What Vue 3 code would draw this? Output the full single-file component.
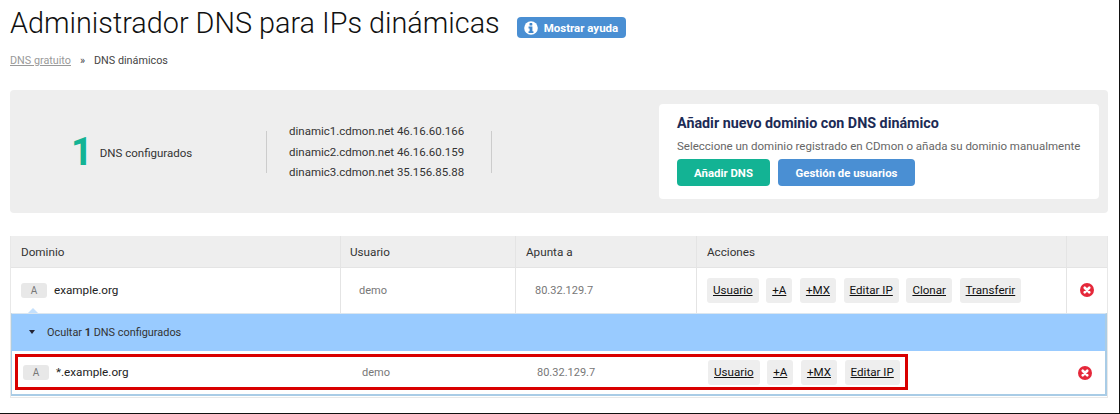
<template>
  <div class="page">
    <div class="title-row">
      <h1 class="title">Administrador DNS para IPs dinámicas</h1>
      <a class="help-btn">
        <svg class="help-icon" viewBox="0 0 16 16" width="14" height="14">
          <circle cx="8" cy="8" r="7.8" fill="#fff" />
          <rect x="6.3" y="2.4" width="3.2" height="2.8" rx="0.6" fill="#3f86cc" />
          <path d="M5.2 6.4h4.4v5.2h1.2v2.2H5.2v-2.2h1.2V8.6H5.2z" fill="#3f86cc" />
        </svg>
        Mostrar ayuda
      </a>
    </div>

    <div class="crumbs">
      <a class="crumb-link">DNS gratuito</a>
      <span class="crumb-sep">»</span>
      <span>DNS dinámicos</span>
    </div>

    <section class="summary">
      <div class="count">
        <span class="count-num">1</span>
        <span class="count-label">DNS configurados</span>
      </div>
      <div class="servers">
        <div v-for="s in servers" :key="s">{{ s }}</div>
      </div>
      <div class="add-box">
        <h2 class="add-title">Añadir nuevo dominio con DNS dinámico</h2>
        <p class="add-text">Seleccione un dominio registrado en CDmon o añada su dominio manualmente</p>
        <div class="add-actions">
          <a class="btn btn-green">Añadir DNS</a>
          <a class="btn btn-blue">Gestión de usuarios</a>
        </div>
      </div>
    </section>

    <section class="table">
      <div class="row head">
        <div class="cell">Dominio</div>
        <div class="cell">Usuario</div>
        <div class="cell">Apunta a</div>
        <div class="cell">Acciones</div>
        <div class="cell"></div>
      </div>

      <div class="row parent">
        <div class="cell domain"><span class="tag">A</span><span class="name">example.org</span></div>
        <div class="cell muted">demo</div>
        <div class="cell muted ip">80.32.129.7</div>
        <div class="cell actions">
          <a v-for="a in parentActions" :key="a" class="action">{{ a }}</a>
        </div>
        <div class="cell remove">
          <svg viewBox="0 0 16 16" width="14" height="14">
            <circle cx="8" cy="8" r="8" fill="#e5283a" />
            <path d="M5.4 5.4l5.2 5.2M10.6 5.4l-5.2 5.2" stroke="#fff" stroke-width="3" stroke-linecap="round" />
          </svg>
        </div>
      </div>

      <div class="children">
        <div class="toggle">
          <span class="caret"></span>
          <span>Ocultar <b>1</b> DNS configurados</span>
        </div>
        <div class="row child">
          <div class="cell domain"><span class="tag">A</span><span class="name">*.example.org</span></div>
          <div class="cell muted">demo</div>
          <div class="cell muted ip">80.32.129.7</div>
          <div class="cell actions">
            <a v-for="a in childActions" :key="a" class="action">{{ a }}</a>
          </div>
          <div class="cell remove">
            <svg viewBox="0 0 16 16" width="14" height="14">
              <circle cx="8" cy="8" r="8" fill="#e5283a" />
              <path d="M5.4 5.4l5.2 5.2M10.6 5.4l-5.2 5.2" stroke="#fff" stroke-width="3" stroke-linecap="round" />
            </svg>
          </div>
        </div>
        <!-- marca roja encima de la fila -->
        <div class="highlight"></div>
      </div>
    </section>
  </div>
</template>

<script setup>
const servers = [
  'dinamic1.cdmon.net 46.16.60.166',
  'dinamic2.cdmon.net 46.16.60.159',
  'dinamic3.cdmon.net 35.156.85.88',
]
const parentActions = ['Usuario', '+A', '+MX', 'Editar IP', 'Clonar', 'Transferir']
const childActions = ['Usuario', '+A', '+MX', 'Editar IP']
</script>

<style>
html, body {
  margin: 0;
  background: #fff;
}
</style>

<style scoped>
.page {
  box-sizing: border-box;
  width: 1120px;
  height: 414px;
  padding: 5px 11px 0 10px;
  border-right: 1px solid #111;
  border-bottom: 1px solid #111;
  font-family: Roboto, "Liberation Sans", sans-serif;
  color: #333;
  overflow: hidden;
}

.title-row {
  display: flex;
  align-items: center;
  gap: 17px;
  height: 36px;
}

.title {
  margin: 0;
  font-size: 28.8px;
  font-weight: 300;
  color: #111;
  white-space: nowrap;
}

.help-btn {
  display: flex;
  align-items: center;
  gap: 6px;
  height: 21px;
  margin-top: 9px;
  padding: 0 8px 0 7px;
  background: #4a8fd3;
  color: #fff;
  border-radius: 4px;
  font-size: 11.5px;
  font-weight: 700;
}

.crumbs {
  display: flex;
  gap: 9px;
  margin-top: 12px;
  font-size: 10.8px;
  line-height: 16px;
  color: #444;
}

.crumb-link {
  color: #999;
  text-decoration: underline;
}

.summary {
  display: flex;
  align-items: center;
  height: 123px;
  margin-top: 21px;
  background: #eee;
  border-radius: 4px;
}

.count {
  display: flex;
  align-items: center;
  width: 257px;
  height: 42px;
  padding-left: 61px;
  box-sizing: border-box;
  border-right: 1px solid #ccc;
}

.count-num {
  font-size: 38px;
  font-weight: 700;
  color: #13b394;
  margin-right: 7px;
}

.count-label {
  font-size: 11.5px;
  margin-top: 3px;
}

.servers {
  width: 225px;
  height: 42px;
  padding-left: 22px;
  box-sizing: border-box;
  display: flex;
  flex-direction: column;
  justify-content: center;
  gap: 4.4px;
  border-right: 1px solid #ccc;
  font-size: 11.5px;
  line-height: 16px;
}

.add-box {
  box-sizing: border-box;
  width: 440px;
  height: 95px;
  margin-left: 167px;
  padding: 10px 18px;
  background: #fff;
  border-radius: 4px;
}

.add-title {
  margin: 0;
  font-size: 14.3px;
  line-height: 18px;
  font-weight: 700;
  color: #1c2b55;
}

.add-text {
  margin: 6px 0 5px;
  font-size: 11.5px;
  line-height: 16px;
  color: #666;
  white-space: nowrap;
}

.add-actions {
  display: flex;
  gap: 8px;
}

.btn {
  display: flex;
  align-items: center;
  justify-content: center;
  height: 27px;
  border-radius: 4px;
  color: #fff;
  font-size: 11.4px;
  font-weight: 700;
}

.btn-green {
  width: 93px;
  background: #13b394;
}

.btn-blue {
  width: 137px;
  background: #4a8fd3;
}

.table {
  margin-top: 23px;
  border: 1px solid #e8e8e8;
  border-top: 0;
  padding-bottom: 1px;
  font-size: 11.7px;
}

.row {
  display: grid;
  grid-template-columns: 330px 175px 181px 370px 1fr;
}

.head {
  height: 31px;
  background: #eee;
  color: #333;
  border-bottom: 1px solid #e4e4e4;
}

.cell {
  display: flex;
  align-items: center;
  box-sizing: border-box;
  padding-left: 10px;
  border-right: 1px solid #e4e4e4;
}

.cell:last-child {
  border-right: 0;
}

.head .cell:nth-child(2) {
  padding-left: 9px;
}

.parent {
  height: 45px;
}

.domain {
  font-size: 11.7px;
  color: #222;
}

.name {
  margin-top: -2px;
}

.tag {
  display: inline-flex;
  align-items: center;
  justify-content: center;
  width: 26px;
  height: 15px;
  margin-right: 7px;
  background: #e8e8e8;
  border-radius: 3px;
  font-size: 10px;
  color: #777;
}

.muted {
  padding-left: 19px;
  font-size: 11px;
  color: #777;
}

.parent .muted:nth-child(2) {
  padding-left: 18px;
}

.actions {
  gap: 7.6px;
  padding-left: 10px;
}

.action {
  padding: 0 6px;
  height: 25px;
  line-height: 25px;
  font-size: 11.6px;
  background: #eee;
  border-radius: 3px;
  color: #111;
  text-decoration: underline;
}

.remove {
  justify-content: center;
  padding-left: 0;
  padding-bottom: 1px;
}

.children {
  position: relative;
  background: #99cbff;
  border-top: 1px solid #dbe6ef;
  border-left: 1px solid #a9cce6;
  border-right: 2px solid #a9cce6;
  border-bottom: 2px solid #a9cce6;
}

/* flechita que apunta a la fila padre */
.children::before {
  content: '';
  position: absolute;
  left: 16px;
  top: -6px;
  border: 5px solid transparent;
  border-top: 0;
  border-bottom-color: #c4e0fc;
}

.toggle {
  display: flex;
  align-items: center;
  gap: 12px;
  box-sizing: border-box;
  height: 37px;
  padding: 0 0 1px 17px;
  font-size: 10.9px;
  color: #333;
}

.caret {
  width: 0;
  height: 0;
  border: 3.5px solid transparent;
  border-top: 4px solid #223;
  border-bottom: 0;
}

.child {
  height: 43px;
  background: #fff;
  grid-template-columns: 331px 175px 181px 369px 1fr;
}

.child .cell {
  border-right: 0;
}

.child .domain {
  padding-left: 11px;
}

.child .actions {
  padding-left: 9px;
}

.child .remove {
  padding-right: 3px;
  padding-bottom: 0;
}

.highlight {
  position: absolute;
  left: 3px;
  top: 40px;
  width: 887px;
  height: 30px;
  border: 3px solid #d90000;
}
</style>
